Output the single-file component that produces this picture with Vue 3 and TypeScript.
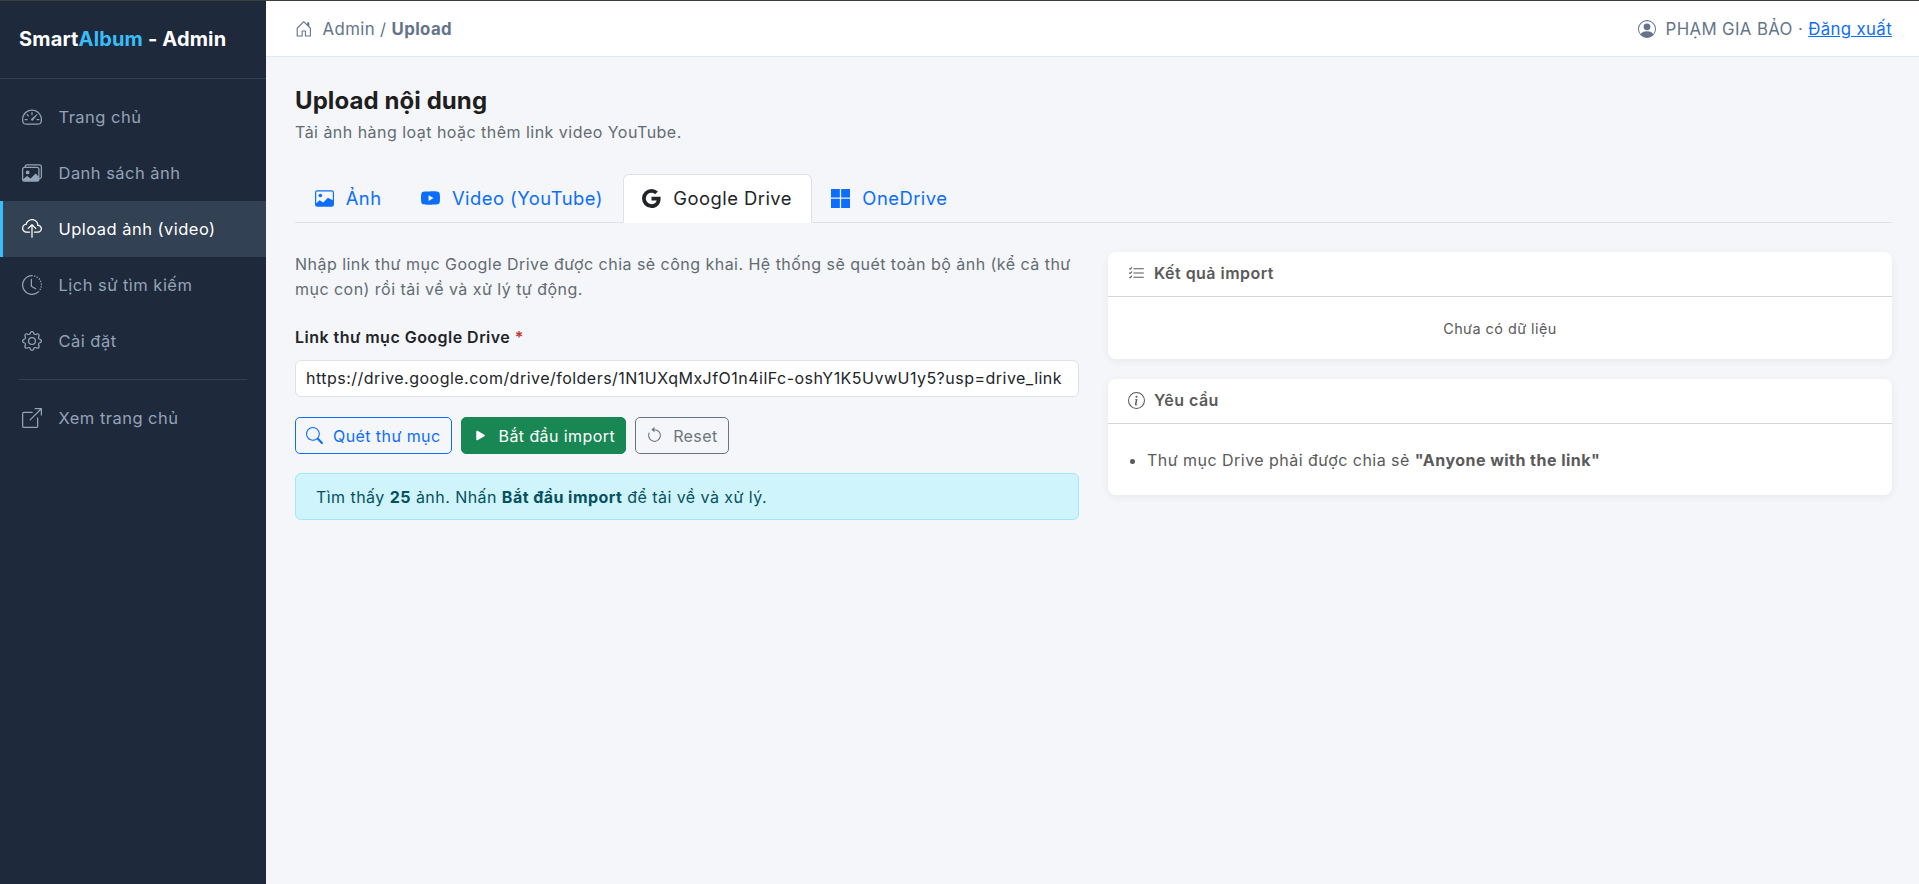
<script setup lang="ts">
const icons: Record<string, string[]> = {
  speedometer: [
    'M8 4a.5.5 0 0 1 .5.5V6a.5.5 0 0 1-1 0V4.5A.5.5 0 0 1 8 4M3.732 5.732a.5.5 0 0 1 .707 0l.915.914a.5.5 0 1 1-.708.708l-.914-.915a.5.5 0 0 1 0-.707M2 10a.5.5 0 0 1 .5-.5h1.586a.5.5 0 0 1 0 1H2.5A.5.5 0 0 1 2 10m9.5 0a.5.5 0 0 1 .5-.5h1.5a.5.5 0 0 1 0 1H12a.5.5 0 0 1-.5-.5m.754-4.246a.39.39 0 0 0-.527-.02L7.547 9.31a.91.91 0 1 0 1.302 1.258l3.434-4.297a.39.39 0 0 0-.029-.518z',
    'M0 10a8 8 0 1 1 15.547 2.661c-.442 1.253-1.845 1.482-2.905 1.482H3.358c-1.06 0-2.464-.229-2.906-1.482A8 8 0 0 1 0 10m8-7a7 7 0 0 0-6.603 9.329c.203.575.923.876 1.68.876h9.846c.757 0 1.477-.301 1.68-.876A7 7 0 0 0 8 3',
  ],
  images: [
    'M4.502 9a1.5 1.5 0 1 0 0-3 1.5 1.5 0 0 0 0 3',
    'M14.002 13a2 2 0 0 1-2 2h-10a2 2 0 0 1-2-2V5A2 2 0 0 1 2 3a2 2 0 0 1 2-2h10a2 2 0 0 1 2 2v8a2 2 0 0 1-1.998 2M14 2H4a1 1 0 0 0-1 1h9.002a2 2 0 0 1 2 2v7A1 1 0 0 0 15 11V3a1 1 0 0 0-1-1M2.002 4a1 1 0 0 0-1 1v8l2.646-2.354a.5.5 0 0 1 .63-.062l2.66 1.773 3.71-3.71a.5.5 0 0 1 .577-.094l1.777 1.947V5a1 1 0 0 0-1-1z',
  ],
  upload: [
    'M4.406 1.342A5.53 5.53 0 0 1 8 0c2.69 0 4.923 2 5.166 4.579C14.758 4.804 16 6.137 16 7.773 16 9.569 14.502 11 12.687 11H10a.5.5 0 0 1 0-1h2.688C13.979 10 15 8.988 15 7.773c0-1.216-1.02-2.228-2.313-2.228h-.5v-.5C12.188 2.825 10.328 1 8 1a4.53 4.53 0 0 0-2.941 1.1c-.757.652-1.153 1.438-1.153 2.055v.448l-.445.049C2.064 4.805 1 5.952 1 7.318 1 8.785 2.23 10 3.781 10H6a.5.5 0 0 1 0 1H3.781C1.708 11 0 9.366 0 7.318c0-1.763 1.266-3.223 2.942-3.593.143-.863.698-1.723 1.464-2.383',
    'M7.646 4.146a.5.5 0 0 1 .708 0l3 3a.5.5 0 0 1-.708.708L8.5 5.707V14.5a.5.5 0 0 1-1 0V5.707L5.354 7.854a.5.5 0 1 1-.708-.708z',
  ],
  history: [
    'M8.515 1.019A7 7 0 0 0 8 1V0a8 8 0 0 1 .589.022zm2.004.45a7 7 0 0 0-.985-.299l.219-.976q.576.129 1.126.342zm1.37.71a7 7 0 0 0-.439-.27l.493-.87a8 8 0 0 1 .979.654l-.615.789a7 7 0 0 0-.418-.302zm1.834 1.79a7 7 0 0 0-.653-.796l.724-.69q.406.429.747.91zm.744 1.352a7 7 0 0 0-.214-.468l.893-.45a8 8 0 0 1 .45 1.088l-.95.313a7 7 0 0 0-.179-.483m.53 2.507a7 7 0 0 0-.1-1.025l.985-.17q.1.58.116 1.17zm-.131 1.538q.05-.254.081-.51l.993.123a8 8 0 0 1-.23 1.155l-.964-.267q.069-.247.12-.501m-.952 2.379q.276-.436.486-.908l.914.405q-.24.54-.555 1.038zm-.964 1.205q.183-.183.35-.378l.758.653a8 8 0 0 1-.401.432z',
    'M8 1a7 7 0 1 0 4.95 11.95l.707.707A8.001 8.001 0 1 1 8 0z',
    'M7.5 3a.5.5 0 0 1 .5.5v5.21l3.248 1.856a.5.5 0 0 1-.496.868l-3.5-2A.5.5 0 0 1 7 9V3.5a.5.5 0 0 1 .5-.5',
  ],
  gear: [
    'M8 4.754a3.246 3.246 0 1 0 0 6.492 3.246 3.246 0 0 0 0-6.492M5.754 8a2.246 2.246 0 1 1 4.492 0 2.246 2.246 0 0 1-4.492 0',
    'M9.796 1.343c-.527-1.79-3.065-1.79-3.592 0l-.094.319a.873.873 0 0 1-1.255.52l-.292-.16c-1.64-.892-3.433.902-2.54 2.541l.159.292a.873.873 0 0 1-.52 1.255l-.319.094c-1.79.527-1.79 3.065 0 3.592l.319.094a.873.873 0 0 1 .52 1.255l-.16.292c-.892 1.64.901 3.434 2.541 2.54l.292-.159a.873.873 0 0 1 1.255.52l.094.319c.527 1.79 3.065 1.79 3.592 0l.094-.319a.873.873 0 0 1 1.255-.52l.292.16c1.64.893 3.434-.902 2.54-2.541l-.159-.292a.873.873 0 0 1 .52-1.255l.319-.094c1.79-.527 1.79-3.065 0-3.592l-.319-.094a.873.873 0 0 1-.52-1.255l.16-.292c.893-1.64-.902-3.433-2.541-2.54l-.292.159a.873.873 0 0 1-1.255-.52zm-2.633.283c.246-.835 1.428-.835 1.674 0l.094.319a1.873 1.873 0 0 0 2.693 1.115l.291-.16c.764-.415 1.6.42 1.184 1.185l-.159.292a1.873 1.873 0 0 0 1.116 2.692l.318.094c.835.246.835 1.428 0 1.674l-.319.094a1.873 1.873 0 0 0-1.115 2.693l.16.291c.415.764-.42 1.6-1.185 1.184l-.291-.159a1.873 1.873 0 0 0-2.693 1.116l-.094.318c-.246.835-1.428.835-1.674 0l-.094-.319a1.873 1.873 0 0 0-2.692-1.115l-.292.16c-.764.415-1.6-.42-1.184-1.185l.159-.291A1.873 1.873 0 0 0 1.945 8.93l-.319-.094c-.835-.246-.835-1.428 0-1.674l.319-.094A1.873 1.873 0 0 0 3.06 4.377l-.16-.292c-.415-.764.42-1.6 1.185-1.184l.292.159a1.873 1.873 0 0 0 2.692-1.115z',
  ],
  external: [
    'M8.636 3.5a.5.5 0 0 0-.5-.5H1.5A1.5 1.5 0 0 0 0 4.5v10A1.5 1.5 0 0 0 1.5 16h10a1.5 1.5 0 0 0 1.5-1.5V7.864a.5.5 0 0 0-1 0V14.5a.5.5 0 0 1-.5.5h-10a.5.5 0 0 1-.5-.5v-10a.5.5 0 0 1 .5-.5h6.636a.5.5 0 0 0 .5-.5',
    'M16 .5a.5.5 0 0 0-.5-.5h-5a.5.5 0 0 0 0 1h3.793L6.146 9.146a.5.5 0 1 0 .708.708L15 1.707V5.5a.5.5 0 0 0 1 0z',
  ],
  house: [
    'M8.354 1.146a.5.5 0 0 0-.708 0l-6 6A.5.5 0 0 0 1.5 7.5v7a.5.5 0 0 0 .5.5h4.5a.5.5 0 0 0 .5-.5v-4h2v4a.5.5 0 0 0 .5.5H14a.5.5 0 0 0 .5-.5v-7a.5.5 0 0 0-.146-.354L13 5.793V2.5a.5.5 0 0 0-.5-.5h-1a.5.5 0 0 0-.5.5v1.293zM2.5 14V7.707l5.5-5.5 5.5 5.5V14H10v-4a.5.5 0 0 0-.5-.5h-3a.5.5 0 0 0-.5.5v4z',
  ],
  person: [
    'M11 6a3 3 0 1 1-6 0 3 3 0 0 1 6 0',
    'M0 8a8 8 0 1 1 16 0A8 8 0 0 1 0 8m8-7a7 7 0 0 0-5.468 11.37C3.242 11.226 4.805 10 8 10s4.757 1.225 5.468 2.37A7 7 0 0 0 8 1',
  ],
  image: [
    'M6.002 5.5a1.5 1.5 0 1 1-3 0 1.5 1.5 0 0 1 3 0',
    'M2.002 1a2 2 0 0 0-2 2v10a2 2 0 0 0 2 2h12a2 2 0 0 0 2-2V3a2 2 0 0 0-2-2zm12 1a1 1 0 0 1 1 1v6.5l-3.777-1.947a.5.5 0 0 0-.577.093l-3.71 3.71-2.66-1.772a.5.5 0 0 0-.63.062L1.002 12V3a1 1 0 0 1 1-1z',
  ],
  youtube: [
    'M8.051 1.999h.089c.822.003 4.987.033 6.11.335a2.01 2.01 0 0 1 1.415 1.42c.101.38.172.883.22 1.402l.01.104.022.26.008.104c.065.914.073 1.77.074 1.957v.075c-.001.194-.01 1.108-.082 2.06l-.008.105-.009.104c-.05.572-.124 1.14-.235 1.558a2.01 2.01 0 0 1-1.415 1.42c-1.16.312-5.569.334-6.18.335h-.142c-.309 0-1.587-.006-2.927-.052l-.17-.006-.087-.004-.171-.007-.171-.007c-1.11-.049-2.167-.128-2.654-.26a2.01 2.01 0 0 1-1.415-1.419c-.111-.417-.185-.986-.235-1.558L.09 9.82l-.008-.104A31 31 0 0 1 0 7.68v-.123c.002-.215.01-.958.064-1.778l.007-.103.003-.052.008-.104.022-.26.01-.104c.048-.519.119-1.023.22-1.402a2.01 2.01 0 0 1 1.415-1.42c.487-.13 1.544-.21 2.654-.26l.17-.007.172-.006.086-.003.171-.007A100 100 0 0 1 7.858 2zM6.4 5.209v4.818l4.157-2.408z',
  ],
  google: [
    'M15.545 6.558a9.4 9.4 0 0 1 .139 1.626c0 2.434-.87 4.492-2.384 5.885h.002C11.978 15.292 10.158 16 8 16A8 8 0 1 1 8 0a7.7 7.7 0 0 1 5.352 2.082l-2.284 2.284A4.35 4.35 0 0 0 8 3.166c-2.087 0-3.86 1.408-4.492 3.304a4.8 4.8 0 0 0 0 3.063h.003c.635 1.893 2.405 3.301 4.492 3.301 1.078 0 2.004-.276 2.722-.764h-.003a3.7 3.7 0 0 0 1.599-2.431H8v-3.08z',
  ],
  microsoft: ['M7.462 0H0v7.19h7.462zM16 0H8.538v7.19H16zM7.462 8.211H0V16h7.462zm8.538 0H8.538V16H16z'],
  search: [
    'M11.742 10.344a6.5 6.5 0 1 0-1.397 1.398h-.001q.044.06.098.115l3.85 3.85a1 1 0 0 0 1.415-1.414l-3.85-3.85a1 1 0 0 0-.115-.1zM12 6.5a5.5 5.5 0 1 1-11 0 5.5 5.5 0 0 1 11 0',
  ],
  play: [
    'm11.596 8.697-6.363 3.692c-.54.313-1.233-.066-1.233-.697V4.308c0-.63.692-1.01 1.233-.696l6.363 3.692a.802.802 0 0 1 0 1.393',
  ],
  reset: [
    'M8 3a5 5 0 1 1-4.546 2.914.5.5 0 0 0-.908-.417A6 6 0 1 0 8 2z',
    'M8 4.466V.534a.25.25 0 0 0-.41-.192L5.23 2.308a.25.25 0 0 0 0 .384l2.36 1.966A.25.25 0 0 0 8 4.466',
  ],
  listCheck: [
    'M5 11.5a.5.5 0 0 1 .5-.5h9a.5.5 0 0 1 0 1h-9a.5.5 0 0 1-.5-.5m0-4a.5.5 0 0 1 .5-.5h9a.5.5 0 0 1 0 1h-9a.5.5 0 0 1-.5-.5m0-4a.5.5 0 0 1 .5-.5h9a.5.5 0 0 1 0 1h-9a.5.5 0 0 1-.5-.5M3.854 2.146a.5.5 0 0 1 0 .708l-1.5 1.5a.5.5 0 0 1-.708 0l-.5-.5a.5.5 0 1 1 .708-.708L2 3.293l1.146-1.147a.5.5 0 0 1 .708 0m0 4a.5.5 0 0 1 0 .708l-1.5 1.5a.5.5 0 0 1-.708 0l-.5-.5a.5.5 0 1 1 .708-.708L2 7.293l1.146-1.147a.5.5 0 0 1 .708 0m0 4a.5.5 0 0 1 0 .708l-1.5 1.5a.5.5 0 0 1-.708 0l-.5-.5a.5.5 0 0 1 .708-.708l.146.147 1.146-1.147a.5.5 0 0 1 .708 0',
  ],
  info: [
    'M8 15A7 7 0 1 1 8 1a7 7 0 0 1 0 14m0 1A8 8 0 1 0 8 0a8 8 0 0 0 0 16',
    'm8.93 6.588-2.29.287-.082.38.45.083c.294.07.352.176.288.469l-.738 3.468c-.194.897.105 1.319.808 1.319.545 0 1.178-.252 1.465-.598l.088-.416c-.2.176-.492.246-.686.246-.275 0-.375-.193-.304-.533zM9 4.5a1 1 0 1 1-2 0 1 1 0 0 1 2 0',
  ],
}

const navItems = [
  { label: 'Trang chủ', icon: 'speedometer' },
  { label: 'Danh sách ảnh', icon: 'images' },
  { label: 'Upload ảnh (video)', icon: 'upload', active: true },
  { label: 'Lịch sử tìm kiếm', icon: 'history' },
  { label: 'Cài đặt', icon: 'gear' },
]

const tabs = [
  { label: 'Ảnh', icon: 'image' },
  { label: 'Video (YouTube)', icon: 'youtube' },
  { label: 'Google Drive', icon: 'google', active: true },
  { label: 'OneDrive', icon: 'microsoft' },
]

const driveLink = 'https://drive.google.com/drive/folders/1N1UXqMxJfO1n4ilFc-oshY1K5UvwU1y5?usp=drive_link'
</script>

<template>
  <div class="layout">
    <aside class="sidebar">
      <div class="brand">Smart<span>Album</span> - Admin</div>
      <nav class="nav">
        <a v-for="item in navItems" :key="item.label" class="nav-link" :class="{ active: item.active }" href="#">
          <svg class="nav-icon" viewBox="0 0 16 16"><path v-for="d in icons[item.icon]" :key="d" :d="d" fill-rule="evenodd" /></svg>
          {{ item.label }}
        </a>
        <hr class="nav-divider" />
        <a class="nav-link" href="#">
          <svg class="nav-icon" viewBox="0 0 16 16"><path v-for="d in icons.external" :key="d" :d="d" fill-rule="evenodd" /></svg>
          Xem trang chủ
        </a>
      </nav>
    </aside>

    <div class="main">
      <header class="topbar">
        <div class="crumb">
          <svg class="crumb-icon" viewBox="0 0 16 16"><path v-for="d in icons.house" :key="d" :d="d" fill-rule="evenodd" /></svg>
          <span>Admin / <strong>Upload</strong></span>
        </div>
        <div class="user">
          <svg class="user-icon" viewBox="0 0 16 16"><path v-for="d in icons.person" :key="d" :d="d" fill-rule="evenodd" /></svg>
          <span>PHẠM GIA BẢO · <a href="#">Đăng xuất</a></span>
        </div>
      </header>

      <main class="content">
        <h1>Upload nội dung</h1>
        <p class="subtitle">Tải ảnh hàng loạt hoặc thêm link video YouTube.</p>

        <ul class="tabs">
          <li v-for="tab in tabs" :key="tab.label" class="tab" :class="{ active: tab.active }">
            <svg class="tab-icon" viewBox="0 0 16 16"><path v-for="d in icons[tab.icon]" :key="d" :d="d" fill-rule="evenodd" /></svg>
            {{ tab.label }}
          </li>
        </ul>

        <div class="columns">
          <section>
            <p class="lead">
              Nhập link thư mục Google Drive được chia sẻ công khai. Hệ thống sẽ quét toàn bộ ảnh (kể cả thư mục con) rồi tải về và xử lý tự động.
            </p>
            <label class="field-label">Link thư mục Google Drive <span>*</span></label>
            <input class="field" type="text" :value="driveLink" />
            <div class="actions">
              <button class="btn btn-outline" type="button">
                <svg class="btn-icon" viewBox="0 0 16 16"><path v-for="d in icons.search" :key="d" :d="d" fill-rule="evenodd" /></svg>
                Quét thư mục
              </button>
              <button class="btn btn-success" type="button">
                <svg class="btn-icon" viewBox="0 0 16 16"><path v-for="d in icons.play" :key="d" :d="d" fill-rule="evenodd" /></svg>
                Bắt đầu import
              </button>
              <button class="btn btn-muted" type="button">
                <svg class="btn-icon" viewBox="0 0 16 16"><path v-for="d in icons.reset" :key="d" :d="d" fill-rule="evenodd" /></svg>
                Reset
              </button>
            </div>
            <div class="alert">Tìm thấy <b>25</b> ảnh. Nhấn <b>Bắt đầu import</b> để tải về và xử lý.</div>
          </section>

          <section class="side">
            <div class="card">
              <div class="card-header">
                <svg class="card-icon" viewBox="0 0 16 16"><path v-for="d in icons.listCheck" :key="d" :d="d" fill-rule="evenodd" /></svg>
                Kết quả import
              </div>
              <div class="card-empty">Chưa có dữ liệu</div>
            </div>
            <div class="card">
              <div class="card-header">
                <svg class="card-icon" viewBox="0 0 16 16"><path v-for="d in icons.info" :key="d" :d="d" fill-rule="evenodd" /></svg>
                Yêu cầu
              </div>
              <ul class="card-list">
                <li>Thư mục Drive phải được chia sẻ <b>"Anyone with the link"</b></li>
              </ul>
            </div>
          </section>
        </div>
      </main>
    </div>
  </div>
</template>

<style>
html,
body {
  margin: 0;
  background: #f4f6f9;
}
</style>

<style scoped>
.layout {
  display: flex;
  min-height: 884px;
  border-top: 1px solid #3a3f42;
  box-sizing: border-box;
  font-family: Inter, 'Noto Sans', sans-serif;
  font-size: 16px;
  letter-spacing: 0.47px;
  color: #212529;
}

.sidebar {
  width: 266px;
  flex-shrink: 0;
  background: #1e293b;
}

.brand {
  height: 75px;
  padding: 0 0 2px 19px;
  display: flex;
  align-items: center;
  white-space: pre;
  font-size: 20px;
  letter-spacing: 0.15px;
  font-weight: 700;
  color: #fff;
  border-bottom: 1px solid #334155;
}

.brand span {
  color: #38bdf8;
}

.nav {
  padding-top: 10px;
}

.nav-link {
  height: 56px;
  display: flex;
  align-items: center;
  gap: 16.5px;
  padding-left: 22px;
  color: #94a3b8;
  font-size: 16.5px;
  text-decoration: none;
  box-sizing: border-box;
}

.nav-link.active {
  padding-left: 19px;
  border-left: 3px solid #38bdf8;
  background: #334155;
  color: #fff;
}

.nav-icon {
  width: 20px;
  height: 20px;
  fill: currentColor;
  flex-shrink: 0;
}

.nav-divider {
  margin: 10px 19px;
  border: 0;
  border-top: 1px solid #334155;
}

.main {
  flex: 1;
  min-width: 0;
}

.topbar {
  height: 55px;
  background: #fff;
  border-bottom: 1px solid #e2e8f0;
  padding: 0 27px 0 29px;
  display: flex;
  align-items: center;
  justify-content: space-between;
  color: #64748b;
  font-size: 16.8px;
  letter-spacing: 0.37px;
}

.crumb,
.user {
  display: flex;
  align-items: center;
  gap: 10px;
}

.crumb-icon {
  width: 17.6px;
  height: 17.6px;
  fill: currentColor;
}

.user-icon {
  width: 18px;
  height: 18px;
  fill: currentColor;
}

.user a {
  color: #0d6efd;
}

.content {
  padding: 28px 27px 0 29px;
}

h1 {
  margin: 0;
  font-size: 24px;
  line-height: 32px;
  letter-spacing: 0.08px;
  font-weight: 700;
  color: #1e1e1e;
}

.subtitle {
  margin: 3px 0 0;
  font-size: 16px;
  line-height: 24px;
  color: #636b72;
}

.tabs {
  list-style: none;
  margin: 30px 0 0;
  padding: 0;
  display: flex;
  border-bottom: 1px solid #dee2e6;
}

.tab {
  height: 49px;
  margin-bottom: -1px;
  padding: 0 18.7px 1px;
  display: flex;
  align-items: center;
  gap: 12px;
  box-sizing: border-box;
  border: 1px solid transparent;
  border-radius: 6px 6px 0 0;
  color: #0d6efd;
  font-size: 18.4px;
}

.tab.active {
  background: #fff;
  border-color: #dee2e6 #dee2e6 #fff;
  color: #212529;
}

.tab-icon {
  width: 19px;
  height: 19px;
  fill: currentColor;
}

.columns {
  display: grid;
  grid-template-columns: 1fr 1fr;
  gap: 29px;
  margin-top: 29px;
}

.lead {
  margin: 0;
  line-height: 25px;
  color: #636b72;
}

.field-label {
  display: block;
  margin-top: 23px;
  font-weight: 600;
  line-height: 24px;
}

.field-label span {
  color: #c0392b;
}

.field {
  display: block;
  width: 100%;
  height: 37px;
  margin-top: 11px;
  padding: 0 10px 2px;
  box-sizing: border-box;
  border: 1px solid #dee2e6;
  border-radius: 6px;
  background: #fff;
  font: inherit;
  letter-spacing: 0.48px;
  color: #212529;
}

.actions {
  display: flex;
  gap: 9px;
  margin-top: 20px;
}

.btn {
  height: 37px;
  padding: 0 10px;
  display: flex;
  align-items: center;
  gap: 10px;
  border: 1px solid;
  border-radius: 5px;
  background: transparent;
  font: inherit;
  letter-spacing: 0.42px;
}

.btn-icon {
  width: 17px;
  height: 17px;
  fill: currentColor;
}

.btn-outline {
  color: #0d6efd;
  border-color: #0d6efd;
}

.btn-success {
  background: #198754;
  border-color: #198754;
  color: #fff;
}

.btn-muted {
  color: #6c757d;
  border-color: #6c757d;
}

.alert {
  margin-top: 19px;
  height: 47px;
  padding: 0 20px;
  display: flex;
  align-items: center;
  white-space: pre;
  box-sizing: border-box;
  border: 1px solid #9eeaf9;
  border-radius: 6px;
  background: #cff4fc;
  color: #055160;
  letter-spacing: 0.45px;
}

.side {
  display: flex;
  flex-direction: column;
  gap: 20px;
}

.card {
  background: #fff;
  border-radius: 8px;
  box-shadow: 0 2px 8px rgba(0, 0, 0, 0.06);
  color: #5a5a5a;
}

.card-header {
  height: 42px;
  padding: 0 20px 2px;
  display: flex;
  align-items: center;
  gap: 9px;
  border-bottom: 1px solid #d6d6d6;
  font-weight: 600;
}

.card-icon {
  width: 17px;
  height: 17px;
  fill: currentColor;
}

.card-empty {
  height: 62px;
  display: flex;
  align-items: center;
  justify-content: center;
  font-size: 14.4px;
}

.card-list {
  margin: 0;
  padding: 24px 20px 23px 39px;
  line-height: 24px;
}
</style>
